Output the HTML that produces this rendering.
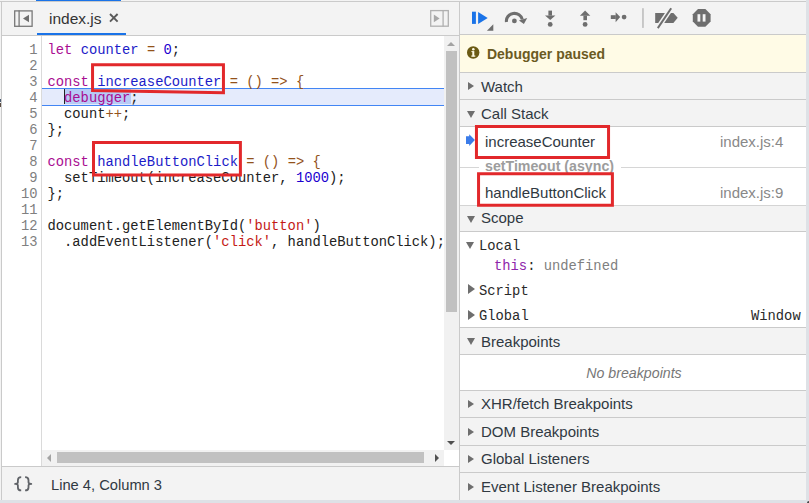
<!DOCTYPE html>
<html><head><meta charset="utf-8">
<style>
*{box-sizing:border-box;margin:0;padding:0}
html,body{width:809px;height:503px;overflow:hidden;background:#f3f3f3}
body{position:relative;font-family:"Liberation Sans",sans-serif;color:#333}
.abs{position:absolute}
.hl{position:absolute;height:1px;background:#cacaca}
.vl{position:absolute;width:1px;background:#cacaca}
#frameR{left:806px;top:0;width:3px;height:503px;background:#dee1e6}
#frameB{left:0;top:500px;width:809px;height:3px;background:#dee1e6}
/* code */
#code{left:2px;top:36px;width:442px;height:415px;background:#fff;overflow:hidden}
#gutter{left:0;top:0;width:40px;height:415px;border-right:1px solid #dadada}
.ln{position:absolute;left:0;width:35.5px;margin-top:3px;text-align:right;font-family:"Liberation Mono",monospace;font-size:13.8px;line-height:16px;color:#808080}
.cl{position:absolute;left:45.5px;margin-top:3px;font-family:"Liberation Mono",monospace;font-size:13.8px;line-height:16px;color:#222;white-space:pre}
.k{color:#a90d91}
.d{color:#1c1cc8}
.o{color:#93521b}
.n{color:#1c00cf}
.s{color:#c41a16}
.red{position:absolute;border:3px solid #e2282b}
.sec{position:absolute;left:460px;width:346px;background:#f3f3f3;border-bottom:1px solid #cacaca;font-size:15px;color:#333}
.tx{font-size:15px;color:#303942}
.mono{font-family:"Liberation Mono",monospace;font-size:13.8px;color:#2a2a2a}
.tri-r{position:absolute;width:0;height:0;border-top:4.6px solid transparent;border-bottom:4.6px solid transparent;border-left:6.8px solid #6e6e6e}
.tri-d{position:absolute;width:0;height:0;border-left:4.7px solid transparent;border-right:4.7px solid transparent;border-top:7.8px solid #6e6e6e}
</style></head><body>
<!-- top frame line -->
<div class="hl" style="left:0;top:1px;width:806px"></div>
<div class="vl" style="left:1px;top:1px;height:499px"></div>

<!-- left tab bar -->
<div class="abs" style="left:36px;top:0;width:85px;height:1px;background:#1a73e8"></div>
<svg class="abs" style="left:13px;top:9px" width="21" height="19" viewBox="0 0 21 19">
 <rect x="1.7" y="1.9" width="17.4" height="15.4" fill="none" stroke="#787878" stroke-width="1.3"/>
 <line x1="6.1" y1="1.5" x2="6.1" y2="17.5" stroke="#787878" stroke-width="1.3"/>
 <path d="M16 5.8 L16 13.3 L10 9.6Z" fill="#6e6e6e"/>
</svg>
<div class="abs" style="left:49px;top:9.5px;font-size:15.5px;color:#333">index.js</div>
<svg class="abs" style="left:108px;top:12px" width="12" height="12" viewBox="0 0 12 12"><path d="M2 2 L9.6 9.6 M9.6 2 L2 9.6" stroke="#5a5a5a" stroke-width="1.9"/></svg>
<div class="abs" style="left:37px;top:33px;width:89px;height:2px;background:#1a73e8"></div>
<svg class="abs" style="left:429px;top:9px" width="21" height="19" viewBox="0 0 21 19">
 <rect x="1.7" y="1.6" width="17.6" height="15.6" fill="none" stroke="#b0b0b0" stroke-width="1.3"/>
 <line x1="14.1" y1="1.5" x2="14.1" y2="17.5" stroke="#b0b0b0" stroke-width="1.3"/>
 <path d="M4.8 5.6 L4.8 13.2 L10.6 9.4Z" fill="#a8a8a8"/>
</svg>
<div class="hl" style="left:2px;top:35px;width:457px"></div>

<!-- code area -->
<div id="code" class="abs">
 <div id="gutter" class="abs"></div>
 <div class="abs" style="left:40px;top:52px;width:402px;height:18px;background:#e5ebfc;border-top:1px solid #4285f4;border-bottom:1px solid #4285f4"></div>
 <div class="abs" style="left:62.5px;top:53px;width:66px;height:15px;background:#b7cbf6"></div>
 <div class="abs" style="left:62px;top:53px;width:1px;height:15px;background:#222"></div>
 <div class="ln" style="top:4px">1</div>
 <div class="ln" style="top:20px">2</div>
 <div class="ln" style="top:36px">3</div>
 <div class="ln" style="top:52px">4</div>
 <div class="ln" style="top:68px">5</div>
 <div class="ln" style="top:84px">6</div>
 <div class="ln" style="top:100px">7</div>
 <div class="ln" style="top:116px">8</div>
 <div class="ln" style="top:132px">9</div>
 <div class="ln" style="top:148px">10</div>
 <div class="ln" style="top:164px">11</div>
 <div class="ln" style="top:180px">12</div>
 <div class="ln" style="top:196px">13</div>
 <div class="cl" style="top:4px"><span class="k">let</span> <span class="d">counter</span> <span class="o">=</span> <span class="n">0</span>;</div>
 <div class="cl" style="top:36px"><span class="k">const</span> <span class="d">increaseCounter</span> <span class="o">= () =&gt; {</span></div>
 <div class="cl" style="top:52px">  <span class="k">debugger</span>;</div>
 <div class="cl" style="top:68px">  count<span class="o">++</span>;</div>
 <div class="cl" style="top:84px">};</div>
 <div class="cl" style="top:116px"><span class="k">const</span> <span class="d">handleButtonClick</span> <span class="o">= () =&gt; {</span></div>
 <div class="cl" style="top:132px">  setTimeout(increaseCounter, <span class="n">1000</span>);</div>
 <div class="cl" style="top:148px">};</div>
 <div class="cl" style="top:180px">document.getElementById(<span class="s">'button'</span>)</div>
 <div class="cl" style="top:196px">  .addEventListener(<span class="s">'click'</span>, handleButtonClick);</div>
</div>
<!-- vertical scrollbar -->
<div class="abs" style="left:444px;top:36px;width:15px;height:414px;background:#f1f1f1"></div>
<div class="abs" style="left:446px;top:51px;width:11px;height:261px;background:#c1c1c1"></div>
<div class="abs" style="left:447px;top:42px;width:0;height:0;border-left:4px solid transparent;border-right:4px solid transparent;border-bottom:4px solid #a3a3a3"></div>
<div class="abs" style="left:447px;top:441px;width:0;height:0;border-left:4px solid transparent;border-right:4px solid transparent;border-top:4px solid #505050"></div>
<!-- horizontal scrollbar -->
<div class="abs" style="left:42px;top:450px;width:402px;height:16px;background:#f1f1f1"></div>
<div class="abs" style="left:444px;top:450px;width:15px;height:16px;background:#fff"></div>
<div class="abs" style="left:57px;top:452px;width:367px;height:11px;background:#c1c1c1"></div>
<div class="abs" style="left:47px;top:454px;width:0;height:0;border-top:4px solid transparent;border-bottom:4px solid transparent;border-right:4px solid #a3a3a3"></div>
<div class="abs" style="left:435px;top:454px;width:0;height:0;border-top:4px solid transparent;border-bottom:4px solid transparent;border-left:4px solid #505050"></div>
<div class="hl" style="left:2px;top:466px;width:457px"></div>
<div class="abs" style="left:2px;top:450px;width:40px;height:16px;background:#fff;border-right:1px solid #dadada"></div>

<!-- status bar -->
<svg class="abs" style="left:0;top:466px" width="40" height="34" viewBox="0 466 40 34"><g fill="none" stroke="#606368" stroke-width="1.8" stroke-linecap="butt" stroke-linejoin="round">
 <path d="M21.2 477.2 Q17.9 477.2 17.9 480.2 L17.9 482.3 Q17.9 483.9 15.1 483.9 Q17.9 483.9 17.9 485.5 L17.9 487.4 Q17.9 490.4 21.2 490.4"/>
 <path d="M25.1 477.2 Q28.5 477.2 28.5 480.2 L28.5 482.3 Q28.5 483.9 31.3 483.9 Q28.5 483.9 28.5 485.5 L28.5 487.4 Q28.5 490.4 25.1 490.4"/>
</g></svg>
<div class="abs" style="left:51px;top:477px;font-size:14.7px;color:#303942">Line 4, Column 3</div>

<!-- divider -->
<div class="vl" style="left:459px;top:2px;height:498px"></div>

<!-- red annotation boxes (code) -->

<!-- right toolbar -->
<svg class="abs" style="left:460px;top:2px" width="260" height="33" viewBox="0 0 260 33">
 <rect x="12" y="9.7" width="3.9" height="12.2" fill="#1a73e8"/>
 <path d="M18.1 10 L27.7 15.9 L18.1 21.9Z" fill="#1a73e8"/>
 <path d="M26.9 28.7 L33.3 28.7 L33.3 22.2Z" fill="#6e6e6e"/>
 <path d="M46.5 20 A8 7.4 0 0 1 62.3 17.6" fill="none" stroke="#6e6e6e" stroke-width="3.1"/>
 <path d="M58.9 18.5 L67.2 15.9 L63.9 22Z" fill="#6e6e6e"/>
 <circle cx="54.4" cy="18.9" r="2.4" fill="#6e6e6e"/>
 <rect x="88.4" y="8.6" width="3.6" height="5" fill="#6e6e6e"/>
 <path d="M85 13.4 L95.4 13.4 L90.2 18Z" fill="#6e6e6e"/>
 <circle cx="90.2" cy="22.4" r="2.4" fill="#6e6e6e"/>
 <rect x="123.4" y="13.6" width="3.6" height="4.6" fill="#6e6e6e"/>
 <path d="M119.9 13.8 L130.3 13.8 L125.1 8.6Z" fill="#6e6e6e"/>
 <circle cx="125.1" cy="22.4" r="2.4" fill="#6e6e6e"/>
 <rect x="150.8" y="13.2" width="5" height="3.8" fill="#6e6e6e"/>
 <path d="M155.6 10.3 L160.2 15.1 L155.6 20.3Z" fill="#6e6e6e"/>
 <circle cx="164.1" cy="15.1" r="2.4" fill="#6e6e6e"/>
 <rect x="182" y="6.2" width="1.9" height="19.7" fill="#c6c6c6"/>
 <path d="M195.2 11 L213.4 11 L217.7 15.8 L213.4 20.9 L195.2 20.9Z" fill="#6e6e6e"/>
 <path d="M197.8 26.1 L211.2 6.2" stroke="#f3f3f3" stroke-width="5"/>
 <path d="M197.8 26.1 L211.2 6.2" stroke="#6e6e6e" stroke-width="2"/>
 <path d="M238 7 L245.4 7 L250.6 12.2 L250.6 19.6 L245.4 24.8 L238 24.8 L232.8 19.6 L232.8 12.2Z" fill="#6e6e6e"/>
 <rect x="237.5" y="12.2" width="2.8" height="7.4" fill="#f3f3f3"/>
 <rect x="242.7" y="12.2" width="2.8" height="7.4" fill="#f3f3f3"/>
</svg>
<div class="hl" style="left:460px;top:34px;width:346px"></div>

<!-- debugger paused -->
<div class="abs" style="left:460px;top:35px;width:346px;height:38px;background:#fffbe6;border-bottom:1px solid #cacaca"></div>
<svg class="abs" style="left:460px;top:40px" width="30" height="26" viewBox="460 40 30 26">
 <circle cx="473.2" cy="52.5" r="6.2" fill="#6b5a14"/>
 <circle cx="473.3" cy="49.2" r="1.25" fill="#fffbe6"/>
 <rect x="472.3" y="51.1" width="2" height="5.3" fill="#fffbe6"/>
 <rect x="471.3" y="55.5" width="4" height="1.2" fill="#fffbe6"/>
 <rect x="471.4" y="51.1" width="1.5" height="1" fill="#fffbe6"/>
</svg>
<div class="abs" style="left:486.5px;top:45.5px;font-size:14.8px;font-weight:bold;color:#6b5a22;transform:scaleX(0.945);transform-origin:0 0;white-space:nowrap">Debugger paused</div>

<!-- sections -->
<div class="sec" style="top:73px;height:27px"></div>
<div class="tri-r" style="left:468px;top:82px"></div><div class="abs tx" style="left:481px;top:77.5px">Watch</div>
<div class="sec" style="top:100px;height:27px"></div>
<div class="tri-d" style="left:467px;top:110.5px"></div><div class="abs tx" style="left:481px;top:105px">Call Stack</div>
<div class="abs" style="left:460px;top:127px;width:346px;height:79px;background:#fff;border-bottom:1px solid #d4d4d4"></div>
<svg class="abs" style="left:465px;top:134px" width="11" height="12" viewBox="0 0 11 12"><path d="M1 2.2 L4.2 2.2 L4.2 0.3 L9.9 6.1 L4.2 11.9 L4.2 10 L1 10Z" fill="#3b7ce9"/></svg>
<div class="abs tx" style="left:485px;top:133px">increaseCounter</div>
<div class="abs" style="left:720px;top:133px;font-size:15px;color:#888">index.js:4</div>
<div class="abs" style="left:460px;top:167px;width:19px;height:1px;background:#d6d6d6"></div>
<div class="abs" style="left:621px;top:167px;width:185px;height:1px;background:#d6d6d6"></div>
<div class="abs" style="left:485px;top:158px;font-size:14.2px;font-weight:bold;color:#9d9d9d">setTimeout (async)</div>
<div class="abs tx" style="left:485px;top:184px">handleButtonClick</div>
<div class="abs" style="left:720px;top:184px;font-size:15px;color:#888">index.js:9</div>

<div class="sec" style="top:206px;height:26px"></div>
<div class="tri-d" style="left:467px;top:215.5px"></div><div class="abs tx" style="left:481px;top:209px">Scope</div>
<div class="abs" style="left:460px;top:232px;width:346px;height:96px;background:#fff;border-bottom:1px solid #cacaca"></div>
<div class="abs" style="left:466px;top:241.5px;width:0;height:0;border-left:4.8px solid transparent;border-right:4.8px solid transparent;border-top:7.6px solid #6e6e6e"></div>
<div class="abs mono" style="left:479px;top:238.5px">Local</div>
<div class="abs mono" style="left:494px;top:258.5px"><span style="color:#8e24aa">this</span>: <span style="color:#808080">undefined</span></div>
<div class="abs" style="left:467.6px;top:284.4px;width:0;height:0;border-top:5px solid transparent;border-bottom:5px solid transparent;border-left:7px solid #6e6e6e"></div>
<div class="abs mono" style="left:479px;top:284px">Script</div>
<div class="abs" style="left:467.6px;top:309.6px;width:0;height:0;border-top:5px solid transparent;border-bottom:5px solid transparent;border-left:7px solid #6e6e6e"></div>
<div class="abs mono" style="left:479px;top:308.5px">Global</div>
<div class="abs mono" style="left:751px;top:308.5px">Window</div>

<div class="sec" style="top:328px;height:27px"></div>
<div class="tri-d" style="left:467px;top:338px"></div><div class="abs tx" style="left:481px;top:333px">Breakpoints</div>
<div class="abs" style="left:460px;top:355px;width:346px;height:36px;background:#fff;border-bottom:1px solid #cacaca"></div>
<div class="abs" style="left:461px;top:364.5px;width:346px;text-align:center;font-size:14.2px;font-style:italic;color:#777">No breakpoints</div>
<div class="sec" style="top:391px;height:27px"></div>
<div class="tri-r" style="left:468px;top:399.5px"></div><div class="abs tx" style="left:481px;top:395px">XHR/fetch Breakpoints</div>
<div class="sec" style="top:418px;height:28px"></div>
<div class="tri-r" style="left:468px;top:427.5px"></div><div class="abs tx" style="left:481px;top:423px">DOM Breakpoints</div>
<div class="sec" style="top:446px;height:27px"></div>
<div class="tri-r" style="left:468px;top:454.5px"></div><div class="abs tx" style="left:481px;top:450px">Global Listeners</div>
<div class="sec" style="top:473px;height:27px;border-bottom:none"></div>
<div class="tri-r" style="left:468px;top:482.5px"></div><div class="abs tx" style="left:481px;top:478px">Event Listener Breakpoints</div>

<svg class="abs" style="left:0;top:0" width="809" height="503" viewBox="0 0 809 503">
 <g fill="none" stroke="#e2282b" stroke-width="3" stroke-linejoin="miter">
  <path d="M92.55 64.75 L223.45 64.75 L223.45 92.65 L92.55 90.55 Z"/>
  <path d="M93.5 142.6 L240.4 142.6 L240.4 175 L93.5 175 Z"/>
  <path d="M476.45 126.6 L608.55 126.6 L608.55 157.55 L476.45 157.55 Z"/>
  <path d="M478.55 173.75 L612.4 173.75 L612.4 205.25 L478.55 205.25 Z"/>
 </g>
</svg>
<div class="abs" style="left:0;top:99px;width:1px;height:3px;background:#4a5a70"></div><div class="abs" style="left:0;top:103px;width:1px;height:4px;background:#5a4a40"></div>
<div id="frameR" class="abs"></div>
<div id="frameB" class="abs"></div>
<div class="abs" style="left:807px;top:501px;width:2px;height:2px;background:#444;border-top-left-radius:2px"></div>
</body></html>
